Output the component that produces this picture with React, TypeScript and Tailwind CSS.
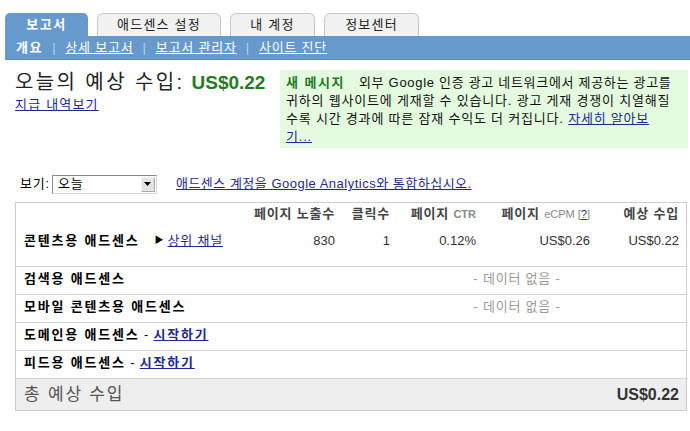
import React from 'react';

const tabs = [
  { label: '애드센스 설정', width: 'w-[124px]' },
  { label: '내 계정', width: 'w-[85px]' },
  { label: '정보센터', width: 'w-[95px]' },
];

const subNav = ['상세 보고서', '보고서 관리자', '사이트 진단'];

const link = 'text-[#1f2a8f] underline';
const cols = 'grid grid-cols-[1fr_90px_55px_86px_114px_89px] pl-[8px] pr-[7px]';

const ProductRow = ({ label, start, noData }: { label: string; start?: boolean; noData?: boolean }) => {
  return (
    <div className={`${cols} h-[28px] items-center border-b border-[#d3d3d3] pb-[3px]`}>
      <div className="whitespace-nowrap">
        <span className="font-bold tracking-[1.8px]">{label}</span>
        {start && (
          <>
            <span> - </span>
            <a className={`${link} font-bold tracking-[1.8px]`}>시작하기</a>
          </>
        )}
      </div>
      {noData && (
        <div className="col-start-3 col-end-7 pl-[20px] text-center text-[#999]">- 데이터 없음 -</div>
      )}
    </div>
  );
};

export default function App() {
  return (
    <div className="w-[690px] h-[431px] overflow-hidden bg-white font-['Liberation_Sans','Noto_Sans_CJK_KR',sans-serif] text-[13px] tracking-[0.8px] text-black">
      {/* tabs */}
      <div className="flex items-end gap-[9px] pl-[5px] pt-[13px]">
        <div className="flex h-[23px] w-[83px] items-center justify-center rounded-t-[5px] bg-[#6699cc] font-bold tracking-[1.6px] text-white">
          보고서
        </div>
        {tabs.map((t) => (
          <div
            key={t.label}
            className={`flex h-[23px] ${t.width} items-center justify-center rounded-t-[6px] border border-b-0 border-[#c8c8c8] bg-[#f1f1f1] tracking-[1.2px] text-[#222]`}
          >
            {t.label}
          </div>
        ))}
      </div>
      <div className="ml-[5px] flex h-[24px] items-center border-b border-[#5b8bbd] bg-[#6699cc] pl-[11px] text-white">
        <span className="font-bold tracking-[1.6px]">개요</span>
        {subNav.map((s) => (
          <React.Fragment key={s}>
            <span className="mx-[9px] text-[#b9d0ea]">|</span>
            <a className="underline">{s}</a>
          </React.Fragment>
        ))}
      </div>

      {/* summary + message */}
      <div className="flex pt-[10px]">
        <div className="w-[280px] shrink-0 pl-[15px]">
          <div className="whitespace-nowrap text-[20px] leading-[24px] tracking-[2.4px] text-[#222]">
            오늘의 예상 수입:
            <span className="ml-[7px] text-[19px] font-bold tracking-normal text-[#267a22]">US$0.22</span>
          </div>
          <a className={`${link} leading-[18px] tracking-[1.2px]`}>지급 내역보기</a>
        </div>
        <div className="w-[408px] whitespace-nowrap bg-[#e4fbdf] pl-[6px] pb-[2px] pt-[4px] leading-[18px] text-[#111]">
          <span className="font-bold tracking-[1.5px] text-[#1d7a1d]">새 메시지</span>
          <span className="ml-[14px] tracking-[0.7px]">외부 Google 인증 광고 네트워크에서 제공하는 광고를</span>
          <br />
          귀하의 웹사이트에 게재할 수 있습니다. 광고 게재 경쟁이 치열해질
          <br />
          수록 시간 경과에 따른 잠재 수익도 더 커집니다. <a className={link}>자세히 알아보</a>
          <br />
          <a className={link}>기...</a>
        </div>
      </div>

      {/* view selector */}
      <div className="mt-[26px] flex h-[20px] items-center pl-[20px]">
        <span>보기:</span>
        <div className="ml-[2px] flex h-[19px] w-[105px] items-center justify-between border border-[#8a8a8a] border-r-[#d8d8d8] border-b-[#d8d8d8] bg-white pl-[5px] pr-[1px]">
          <span>오늘</span>
          <div className="flex h-[15px] w-[14px] items-center justify-center border border-[#aaa] border-l-[#f4f4f4] border-t-[#f4f4f4] bg-[#e4e4e4]">
            <svg width="7" height="4" viewBox="0 0 7 4">
              <path d="M0 0h7L3.5 4z" fill="#000" />
            </svg>
          </div>
        </div>
        <a className={`${link} ml-[19px] tracking-[0.5px]`}>애드센스 계정을 Google Analytics와 통합하십시오.</a>
      </div>

      {/* table */}
      <div className="ml-[15px] mt-[8px] w-[672px] border border-[#cccccc]">
        <div className={`${cols} h-[22px] items-center whitespace-nowrap text-right font-bold text-[#444]`}>
          <div />
          <div>페이지 노출수</div>
          <div>클릭수</div>
          <div>
            페이지 <span className="text-[11px] tracking-normal text-[#888]">CTR</span>
          </div>
          <div>
            페이지 <span className="text-[11px] font-normal tracking-normal text-[#888]">eCPM [<a className="text-[#1f2a8f] underline">?</a>]</span>
          </div>
          <div>예상 수입</div>
        </div>
        <div className="border-b border-[#d3d3d3] pt-[3px] pb-[12px]">
          <div className={`${cols} h-[26px] items-center text-right tracking-normal text-[#333]`}>
            <div className="flex items-center whitespace-nowrap text-left text-black">
              <span className="font-bold tracking-[1.8px]">콘텐츠용 애드센스</span>
              <span className="ml-[15px] mr-[4px] text-[9px]">▶</span>
              <a className={`${link} tracking-[0.8px]`}>상위 채널</a>
            </div>
            <div>830</div>
            <div>1</div>
            <div>0.12%</div>
            <div>US$0.26</div>
            <div>US$0.22</div>
          </div>
        </div>
        <ProductRow label="검색용 애드센스" noData />
        <ProductRow label="모바일 콘텐츠용 애드센스" noData />
        <ProductRow label="도메인용 애드센스" start />
        <ProductRow label="피드용 애드센스" start />
        <div className="flex h-[31px] items-center justify-between bg-[#eeeeee] pl-[8px] pr-[7px]">
          <span className="text-[17px] tracking-[1.8px] text-[#555]">총 예상 수입</span>
          <span className="text-[16px] font-bold tracking-normal text-[#333]">US$0.22</span>
        </div>
      </div>
    </div>
  );
}
